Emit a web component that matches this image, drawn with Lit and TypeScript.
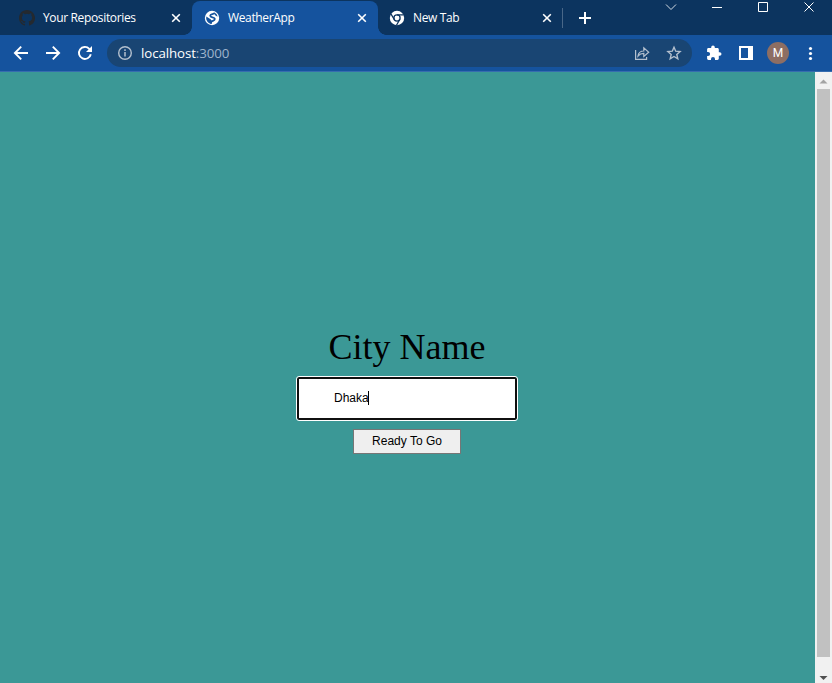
import { LitElement, html, css, svg } from "lit";
import { customElement, property } from "lit/decorators.js";

const github = html`<svg width="16" height="16" viewBox="0 0 16 16"><path fill="#24292f" d="M8 0C3.58 0 0 3.58 0 8c0 3.54 2.29 6.53 5.47 7.59.4.07.55-.17.55-.38 0-.19-.01-.82-.01-1.49-2.01.37-2.53-.49-2.69-.94-.09-.23-.48-.94-.82-1.13-.28-.15-.68-.52-.01-.53.63-.01 1.08.58 1.23.82.72 1.21 1.87.87 2.33.66.07-.52.28-.87.51-1.07-1.78-.2-3.64-.89-3.64-3.95 0-.87.31-1.59.82-2.15-.08-.2-.36-1.02.08-2.12 0 0 .67-.21 2.2.82a7.6 7.6 0 0 1 4 0c1.53-1.04 2.2-.82 2.2-.82.44 1.1.16 1.92.08 2.12.51.56.82 1.27.82 2.15 0 3.07-1.87 3.75-3.65 3.95.29.25.54.73.54 1.48 0 1.07-.01 1.93-.01 2.2 0 .21.15.46.55.38A8 8 0 0 0 8 0z"/></svg>`;

const globe = html`<svg width="16" height="16" viewBox="0 0 16 16"><circle cx="8" cy="8" r="7.2" fill="#fff"/><path fill="none" stroke="#15539e" stroke-width="1.8" d="M10.600 2.800C10 4.800 6.200 3.600 6.200 5.800c0 2.200 4.600.8 4.600 3.200 0 2-2.600 1.600-3.400 2.800-.4.700-.2 1.200-.4 1.800"/><path fill="#15539e" d="M2.300 6.600 6.600 9.200l1.200 1.500-.8 3.200A6 6 0 0 1 2.300 6.600zM10.300 2.400a6 6 0 0 1 3.400 4l-1.700-.3-1.500-1.800z"/></svg>`;

const chrome = html`<svg width="16" height="16" viewBox="0 0 16 16"><circle cx="8" cy="8" r="7.2" fill="#fff"/><g fill="none" stroke="#0c345f" stroke-width="1.3"><circle cx="8" cy="8" r="3.1"/><path d="M8 4.900h6.600M5.300 9.500 1.900 3.900M10.700 9.500l-3.200 5.700"/></g></svg>`;

const cross = html`<svg width="16" height="16" viewBox="0 0 16 16"><path stroke="#fff" stroke-width="1.6" d="m4.2 4.2 7.6 7.6m0-7.6-7.6 7.6"/></svg>`;

const back = svg`<path d="M15 8H2M8.2 1.7 1.9 8l6.3 6.3" fill="none" stroke="#fff" stroke-width="1.9"/>`;

@customElement("browser-tab")
class BrowserTab extends LitElement {
  @property() label = "";
  @property({ type: Boolean, reflect: true }) active = false;

  static styles = css`
    :host { display: flex; align-items: center; position: relative; height: 34px; width: 186px; box-sizing: border-box;
      padding: 0 8px 0 12px; color: #fff; }
    :host([active]) { background: #15539e; border-radius: 8px 8px 0 0; }
    :host([active])::before, :host([active])::after { content: ""; position: absolute; bottom: 0; width: 8px; height: 8px; }
    :host([active])::before { left: -8px; background: radial-gradient(circle at 0 0, transparent 7.5px, #15539e 8px); }
    :host([active])::after { right: -8px; background: radial-gradient(circle at 100% 0, transparent 7.5px, #15539e 8px); }
    .label { flex: 1; margin-left: 8px; font: 12px/16px "Open Sans", "Noto Sans", sans-serif; letter-spacing: -.35px; white-space: nowrap; }
    ::slotted(svg), svg { display: block; flex: none; }
  `;
  render() {
    return html`<slot></slot><span class="label">${this.label}</span>${cross}`;
  }
}

@customElement("app-root")
class AppRoot extends LitElement {
  static styles = css`
    :host { display: flex; flex-direction: column; width: 832px; height: 683px; overflow: hidden; }
    svg { display: block; flex: none; }
    .strip { display: flex; height: 34px; padding-top: 1px; background: #0c345f; }
    .first { width: 185px; margin-left: 7px; }
    .last { width: 185px; padding-left: 11px; }
    .rule { width: 1px; height: 20px; margin: 7px 14px 0 -1px; background: #496788; }
    .plus { margin-top: 9px; }
    .window { display: flex; margin: -1px 0 0 auto; }
    .bar { display: flex; align-items: center; height: 37px; box-sizing: border-box; border-bottom: 1px solid #366caf;
      background: #15539e; padding: 0 11px 0 13px; }
    .nav { margin-right: 16px; }
    .address { display: flex; align-items: center; box-sizing: border-box; width: 585px; height: 28px; margin-left: -2px;
      padding: 0 10px; border-radius: 14px; background: #194573; }
    .url { flex: 1; margin-left: 8px; font: 13.3px/20px "Open Sans", "Noto Sans", sans-serif; color: #fff; letter-spacing: -.1px; }
    .port { color: #9fb4cc; }
    .star { margin-left: 16px; }
    .puzzle { margin-left: 14px; }
    .panel { margin-left: 16px; }
    .avatar { width: 22px; height: 22px; margin-left: 13px; border-radius: 50%; background: #8d6e63; color: #fff;
      font: 12px/22px "Roboto", sans-serif; text-align: center; }
    .menu { margin-left: 15px; }
    .body { flex: 1; display: flex; min-height: 0; }
    .page { flex: 1; display: flex; flex-direction: column; align-items: center; background: #3b9896; padding: 254px 1px 0 0; }
    .title { font: 36px/42px "Liberation Serif", serif; color: #000; height: 51px; }
    .field { box-sizing: border-box; width: 220px; height: 43px; border: 2px solid #101010; border-radius: 2px;
      outline: 1px solid #fff; background: #fff; display: flex; align-items: center; padding: 0 0 2px 35px;
      font: 12px/14px "Liberation Sans", sans-serif; color: #000; }
    .caret { width: 1px; height: 14px; margin-left: -1px; background: #000; }
    .go { box-sizing: border-box; width: 108px; height: 25px; margin: 9px 0 0; padding: 0 0 2px; border: 1px solid #767676;
      background: #efefef; font: 12px/14px "Liberation Sans", sans-serif; color: #000; border-radius: 0; }
    .scroll { width: 17px; box-sizing: border-box; background: #f1f1f1; display: flex; flex-direction: column; align-items: center; }
    .thumb { width: 13px; height: 568px; background: #c1c1c1; }
  `;

  render() {
    return html`
      <div class="strip">
        <browser-tab class="first" label="Your Repositories">${github}</browser-tab>
        <browser-tab active label="WeatherApp">${globe}</browser-tab>
        <browser-tab class="last" label="New Tab">${chrome}</browser-tab>
        <div class="rule"></div>
        <svg class="plus" width="16" height="16" viewBox="0 0 16 16"><path d="M8 2v12M2 8h12" stroke="#fff" stroke-width="2"/></svg>
        <svg class="window" width="168" height="16" viewBox="0 0 168 16" fill="none" stroke="#fff">
          <path stroke="#d5dde5" d="m2 4.500 5 5 5-5"/><path d="M48 7.500h10M94.500 2.500h9v9h-9zM140.500 2.500l9 9m0-9-9 9"/>
        </svg>
      </div>
      <div class="bar">
        <svg class="nav" width="16" height="16" viewBox="0 0 16 16">${back}</svg>
        <svg class="nav" width="16" height="16" viewBox="0 0 16 16"><g transform="matrix(-1 0 0 1 16 0)">${back}</g></svg>
        <svg class="nav" width="16" height="16" viewBox="0 0 16 16"><path d="M13.800 9.200A6 6 0 1 1 12.300 3.800L14 5.500" fill="none" stroke="#fff" stroke-width="1.900"/><path d="M15 1v6H9z" fill="#fff"/></svg>
        <div class="address">
          <svg width="16" height="16" viewBox="0 0 16 16"><circle cx="8" cy="8" r="6.300" fill="none" stroke="#b4c0ce" stroke-width="1.400"/><path d="M8 7v4.500M8 4.300v1.600" stroke="#b4c0ce" stroke-width="1.500"/></svg>
          <span class="url">localhost<span class="port">:3000</span></span>
          <svg width="16" height="16" viewBox="0 0 16 16" fill="none" stroke="#b4c0ce" stroke-width="1.200"><path d="M1.600 5v9.400h11V12"/><path d="M4 11c.5-3.500 2.500-5 5.800-5V2.800L14.700 7.200l-4.900 4.300V8.400C7.300 8.400 5.500 9.200 4 11z"/></svg>
          <svg class="star" width="16" height="16" viewBox="0 0 16 16"><path d="m8 2.200 1.700 4 4.400.4-3.300 2.900 1 4.300L8 11.500l-3.800 2.300 1-4.300L1.900 6.600 6.300 6.200z" fill="none" stroke="#b4c0ce" stroke-width="1.400"/></svg>
        </div>
        <svg class="puzzle" width="16" height="16" viewBox="0 0 16 16"><path fill="#fff" d="M13.700 7.200h-.9V4.500c0-.8-.6-1.400-1.400-1.400H8.800v-.8a1.800 1.800 0 0 0-3.600 0v.8H2.500c-.8 0-1.400.6-1.400 1.400V7h1a2 2 0 0 1 0 4h-1v2.500c0 .8.6 1.400 1.400 1.400H5v-1a2 2 0 0 1 4 0v1h2.400c.8 0 1.400-.6 1.400-1.400v-2.700h.9a1.800 1.800 0 0 0 0-3.600z"/></svg>
        <svg class="panel" width="16" height="16" viewBox="0 0 16 16"><path fill="#fff" fill-rule="evenodd" d="M1 1h14v14H1zM3 3v10h7V3z"/></svg>
        <div class="avatar">M</div>
        <svg class="menu" width="16" height="16" viewBox="0 0 16 16" fill="#fff"><circle cx="6.500" cy="3.500" r="1.600"/><circle cx="6.500" cy="8.500" r="1.600"/><circle cx="6.500" cy="13.500" r="1.600"/></svg>
      </div>
      <div class="body">
        <div class="page">
          <div class="title">City Name</div>
          <div class="field">Dhaka<span class="caret"></span></div>
          <button class="go">Ready To Go</button>
        </div>
        <div class="scroll">
          <svg width="17" height="17" viewBox="0 0 17 17"><path fill="#a3a3a3" d="M4.500 11.500h8l-4-4z"/></svg>
          <div class="thumb"></div>
          <svg width="17" height="26" viewBox="0 0 17 26"><path fill="#505050" d="M4.500 19h8l-4 4z"/></svg>
        </div>
      </div>
    `;
  }
}
